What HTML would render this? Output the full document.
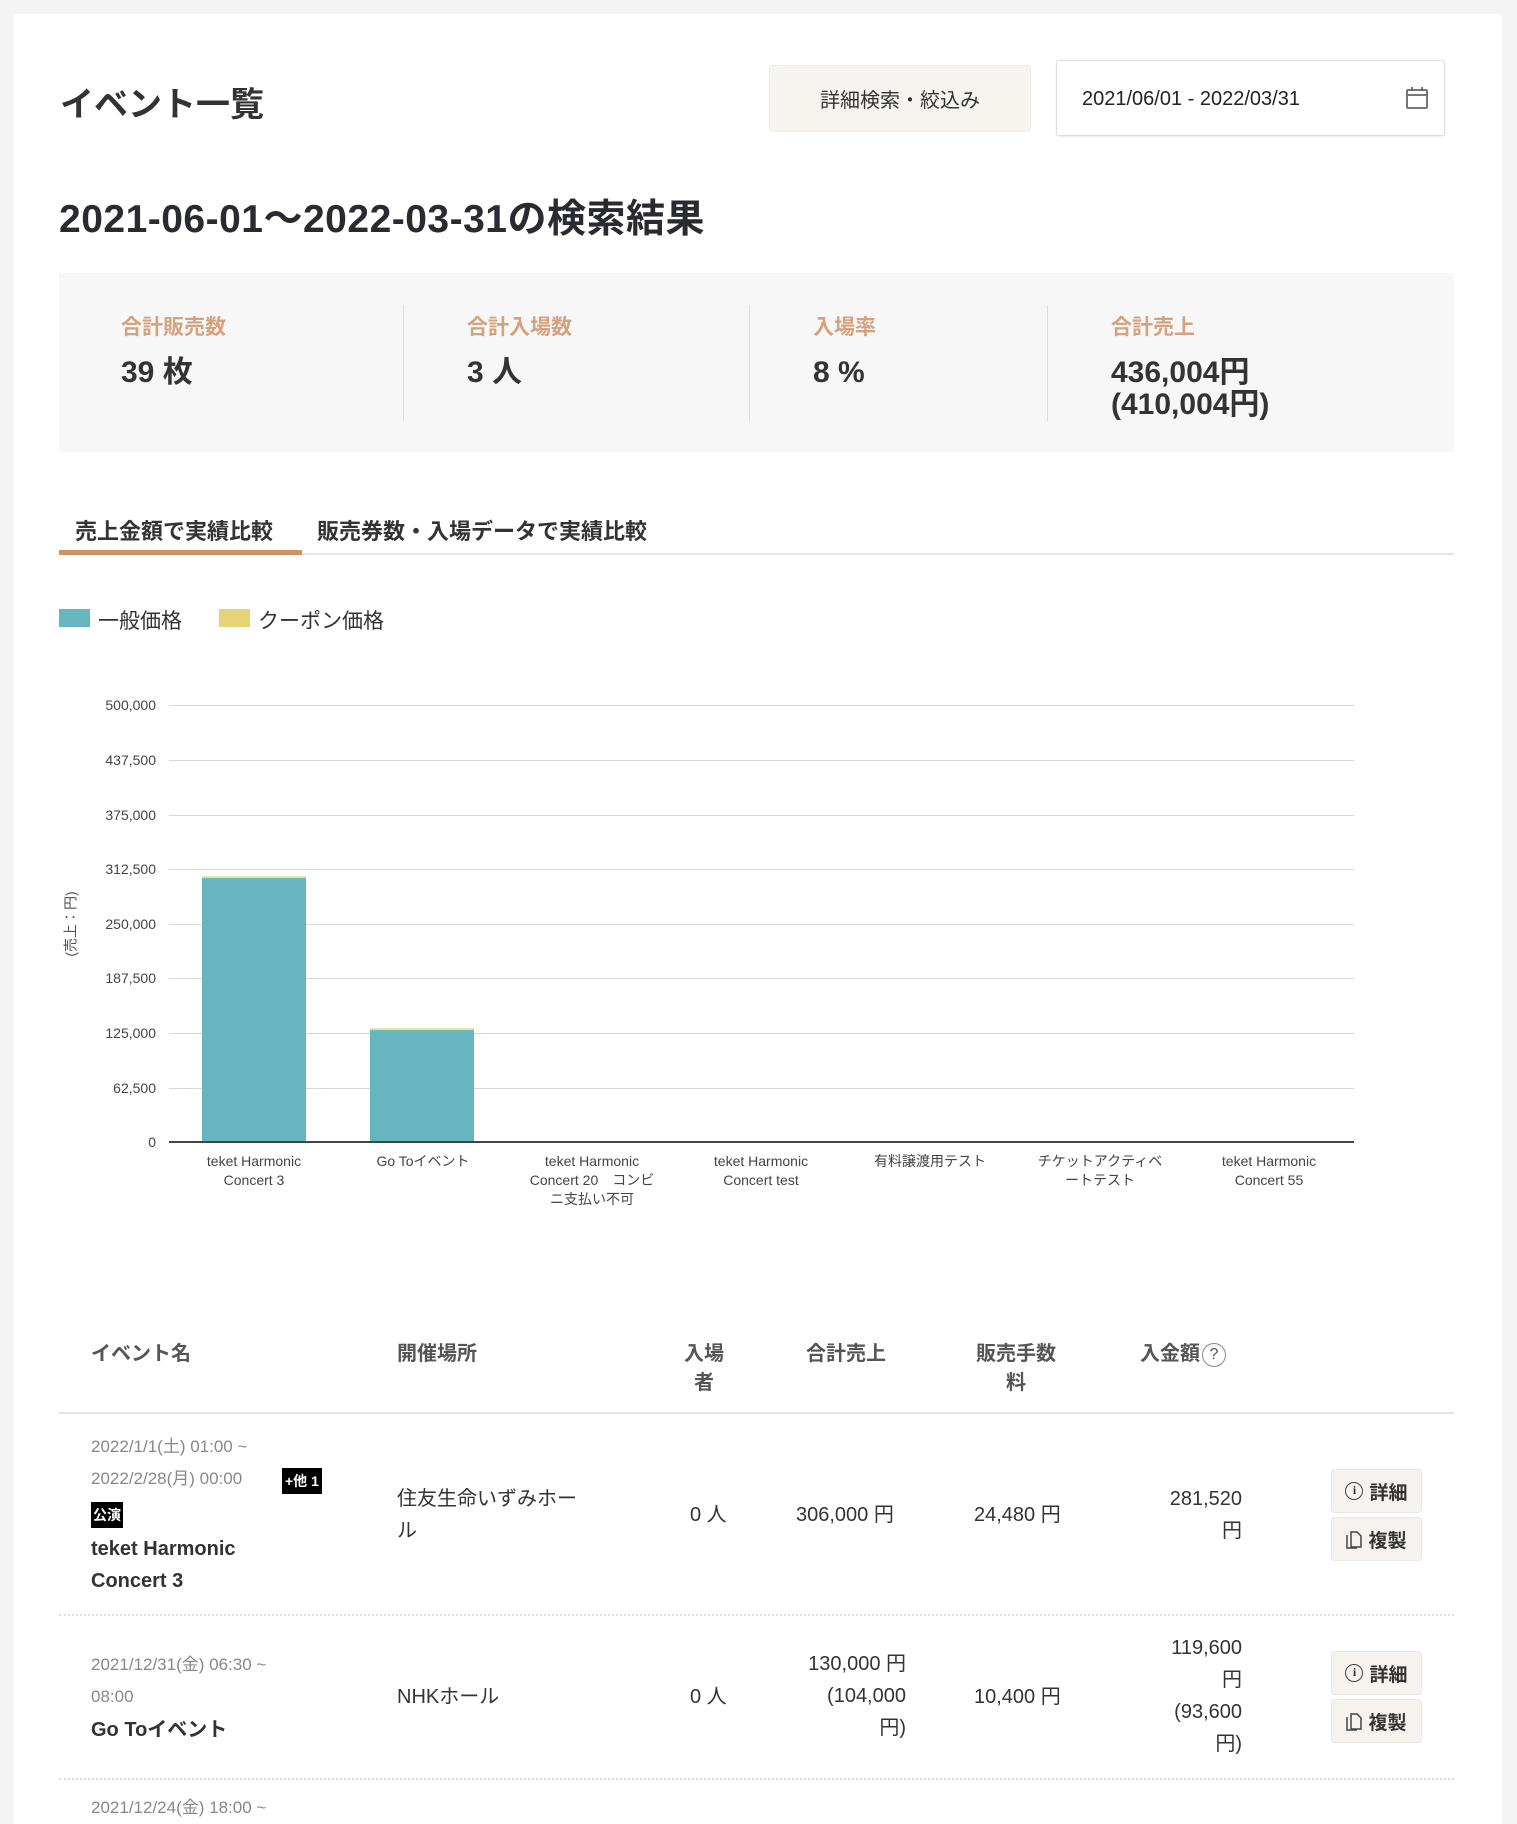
<!DOCTYPE html>
<html><head><meta charset="utf-8">
<style>
*{margin:0;padding:0;box-sizing:border-box}
body{width:1517px;height:1812px;background:#f4f4f4;font-family:"Liberation Sans","Noto Sans CJK JP",sans-serif;color:#222;position:relative;overflow:hidden}
.card{position:absolute;left:14px;top:14px;width:1488px;height:1810px;background:#fff}
.a{position:absolute;white-space:nowrap}
.lbl{color:#d4a27f;font-size:21px;font-weight:bold}
.val{font-size:30px;font-weight:bold;color:#333;line-height:32px}
.div{position:absolute;top:305px;width:1px;height:116px;background:#ddd}
.grid{position:absolute;left:169px;width:1185px;height:1px;background:#d8d8d8}
.yt{position:absolute;right:1361px;font-size:14px;color:#444;text-align:right;width:80px}
.xl{position:absolute;width:160px;text-align:center;font-size:14px;color:#444;line-height:19px}
.th{font-size:20px;color:#555;font-weight:bold;line-height:29px;text-align:center}
.td{font-size:20px;color:#333;line-height:32px}
.dt{font-size:17px;color:#888;line-height:32px}
.btn{position:absolute;left:1331px;width:91px;height:44px;background:#f6f2ed;border:1px solid #ebe6e0;border-radius:4px;font-size:19px;color:#333;font-weight:bold;display:flex;align-items:center;justify-content:center;gap:6px}
.dash{position:absolute;left:59px;width:1395px;border-top:2px dotted #ddd}
</style></head><body>
<div class="card"></div>
<div class="a" style="left:60px;top:77px;font-size:34px;font-weight:bold;color:#333">イベント一覧</div>
<div class="a" style="left:769px;top:65px;width:262px;height:67px;background:#f7f3ee;border:1px solid #eee;border-radius:3px;display:flex;align-items:center;justify-content:center;font-size:20px;color:#333">詳細検索・絞込み</div>
<div class="a" style="left:1056px;top:60px;width:389px;height:76px;border:1px solid #ddd;border-radius:3px;box-shadow:0 1px 2px rgba(0,0,0,.08)"></div>
<div class="a" style="left:1082px;top:88px;font-size:20px;color:#222">2021/06/01 - 2022/03/31</div>
<svg class="a" style="left:1405px;top:86px" width="24" height="24" viewBox="0 0 24 24" fill="none" stroke="#666" stroke-width="1.8"><rect x="2" y="4" width="20" height="18" rx="1"/><line x1="2" y1="9" x2="22" y2="9"/><line x1="7" y1="1" x2="7" y2="5"/><line x1="17" y1="1" x2="17" y2="5"/></svg>
<div class="a" style="left:59px;top:188px;font-size:39px;font-weight:bold;color:#2a2a33;letter-spacing:0.5px">2021-06-01～2022-03-31の検索結果</div>

<div class="a" style="left:59px;top:273px;width:1395px;height:179px;background:#f7f7f7"></div>
<div class="div" style="left:403px"></div><div class="div" style="left:749px"></div><div class="div" style="left:1047px"></div>
<div class="a lbl" style="left:121px;top:311px">合計販売数</div>
<div class="a lbl" style="left:467px;top:311px">合計入場数</div>
<div class="a lbl" style="left:813px;top:311px">入場率</div>
<div class="a lbl" style="left:1111px;top:311px">合計売上</div>
<div class="a val" style="left:121px;top:357px">39 枚</div>
<div class="a val" style="left:467px;top:357px">3 人</div>
<div class="a val" style="left:813px;top:357px">8 %</div>
<div class="a val" style="left:1111px;top:357px">436,004円<br>(410,004円)</div>

<div class="a" style="left:75px;top:514px;font-size:22px;font-weight:bold;color:#333">売上金額で実績比較</div>
<div class="a" style="left:317px;top:514px;font-size:22px;font-weight:bold;color:#333">販売券数・入場データで実績比較</div>
<div class="a" style="left:59px;top:553px;width:1395px;height:2px;background:#e5e5e5"></div>
<div class="a" style="left:59px;top:550px;width:243px;height:5px;background:#cf9362"></div>

<div class="a" style="left:59px;top:609px;width:31px;height:18px;background:#67b6bf"></div>
<div class="a" style="left:98px;top:605px;font-size:21px;color:#333">一般価格</div>
<div class="a" style="left:219px;top:609px;width:31px;height:18px;background:#e8d276"></div>
<div class="a" style="left:258px;top:605px;font-size:21px;color:#333">クーポン価格</div>

<div class="grid" style="top:705px"></div><div class="grid" style="top:760px"></div><div class="grid" style="top:815px"></div><div class="grid" style="top:869px"></div><div class="grid" style="top:924px"></div><div class="grid" style="top:978px"></div><div class="grid" style="top:1033px"></div><div class="grid" style="top:1088px"></div>
<div class="grid" style="top:1141px;height:2px;background:#444"></div>
<div class="yt" style="top:697px">500,000</div><div class="yt" style="top:752px">437,500</div><div class="yt" style="top:807px">375,000</div><div class="yt" style="top:861px">312,500</div><div class="yt" style="top:916px">250,000</div><div class="yt" style="top:970px">187,500</div><div class="yt" style="top:1025px">125,000</div><div class="yt" style="top:1080px">62,500</div><div class="yt" style="top:1134px">0</div>
<div class="a" style="left:38px;top:914px;transform:rotate(-90deg);font-size:14px;color:#555">(売上：円)</div>
<div class="a" style="left:202px;top:876px;width:104px;height:265px;background:#67b6bf;border-top:2px solid #e8e3a0"></div>
<div class="a" style="left:370px;top:1028px;width:104px;height:113px;background:#67b6bf;border-top:2px solid #e8e3a0"></div>
<div class="xl" style="left:174px;top:1152px">teket Harmonic<br>Concert 3</div>
<div class="xl" style="left:343px;top:1152px">Go Toイベント</div>
<div class="xl" style="left:512px;top:1152px">teket Harmonic<br>Concert 20　コンビ<br>ニ支払い不可</div>
<div class="xl" style="left:681px;top:1152px">teket Harmonic<br>Concert test</div>
<div class="xl" style="left:850px;top:1152px">有料譲渡用テスト</div>
<div class="xl" style="left:1020px;top:1152px">チケットアクティベ<br>ートテスト</div>
<div class="xl" style="left:1189px;top:1152px">teket Harmonic<br>Concert 55</div>

<div class="a th" style="left:91px;top:1340px">イベント名</div>
<div class="a th" style="left:397px;top:1340px">開催場所</div>
<div class="a th" style="left:684px;top:1340px">入場<br>者</div>
<div class="a th" style="left:806px;top:1340px">合計売上</div>
<div class="a th" style="left:976px;top:1340px">販売手数<br>料</div>
<div class="a th" style="left:1140px;top:1340px">入金額<span style="display:inline-block;width:24px;height:24px;border:1.5px solid #888;border-radius:50%;font-size:16px;line-height:21px;text-align:center;font-weight:normal;vertical-align:middle;margin-left:2px">?</span></div>
<div class="a" style="left:59px;top:1412px;width:1395px;height:2px;background:#e3e3e3"></div>

<div class="a dt" style="left:91px;top:1431px">2022/1/1(土) 01:00 ~<br>2022/2/28(月) 00:00</div>
<div class="a" style="left:282px;top:1468px;background:#000;color:#fff;font-size:14px;font-weight:bold;padding:3px 3px">+他 1</div>
<div class="a" style="left:91px;top:1502px;background:#000;color:#fff;font-size:14px;font-weight:bold;padding:3px 2px">公演</div>
<div class="a td" style="left:91px;top:1533px;font-weight:bold">teket Harmonic<br>Concert 3</div>
<div class="a td" style="left:397px;top:1483px">住友生命いずみホー<br>ル</div>
<div class="a td" style="left:690px;top:1499px">0 人</div>
<div class="a td" style="left:796px;top:1499px">306,000 円</div>
<div class="a td" style="left:974px;top:1499px">24,480 円</div>
<div class="a td" style="left:1100px;top:1483px;width:142px;text-align:right">281,520<br>円</div>
<div class="btn" style="top:1469px"><span style="display:inline-block;width:18px;height:18px;border:1.5px solid #444;border-radius:50%;font-size:12px;line-height:15px;text-align:center;font-family:'Liberation Serif',serif">i</span>詳細</div>
<div class="btn" style="top:1517px"><svg width="16" height="20" viewBox="0 0 16 20" fill="none" stroke="#444" stroke-width="1.5"><path d="M5 3h6l4 4v11H5z M1 6v13h10"/></svg>複製</div>
<div class="dash" style="top:1614px"></div>

<div class="a dt" style="left:91px;top:1649px">2021/12/31(金) 06:30 ~<br>08:00</div>
<div class="a td" style="left:91px;top:1714px;font-weight:bold">Go Toイベント</div>
<div class="a td" style="left:397px;top:1681px">NHKホール</div>
<div class="a td" style="left:690px;top:1681px">0 人</div>
<div class="a td" style="left:760px;top:1648px;width:146px;text-align:right">130,000 円<br>(104,000<br>円)</div>
<div class="a td" style="left:974px;top:1681px">10,400 円</div>
<div class="a td" style="left:1100px;top:1632px;width:142px;text-align:right">119,600<br>円<br>(93,600<br>円)</div>
<div class="btn" style="top:1651px"><span style="display:inline-block;width:18px;height:18px;border:1.5px solid #444;border-radius:50%;font-size:12px;line-height:15px;text-align:center;font-family:'Liberation Serif',serif">i</span>詳細</div>
<div class="btn" style="top:1699px"><svg width="16" height="20" viewBox="0 0 16 20" fill="none" stroke="#444" stroke-width="1.5"><path d="M5 3h6l4 4v11H5z M1 6v13h10"/></svg>複製</div>
<div class="dash" style="top:1778px"></div>
<div class="a dt" style="left:91px;top:1792px">2021/12/24(金) 18:00 ~</div>
</body></html>
